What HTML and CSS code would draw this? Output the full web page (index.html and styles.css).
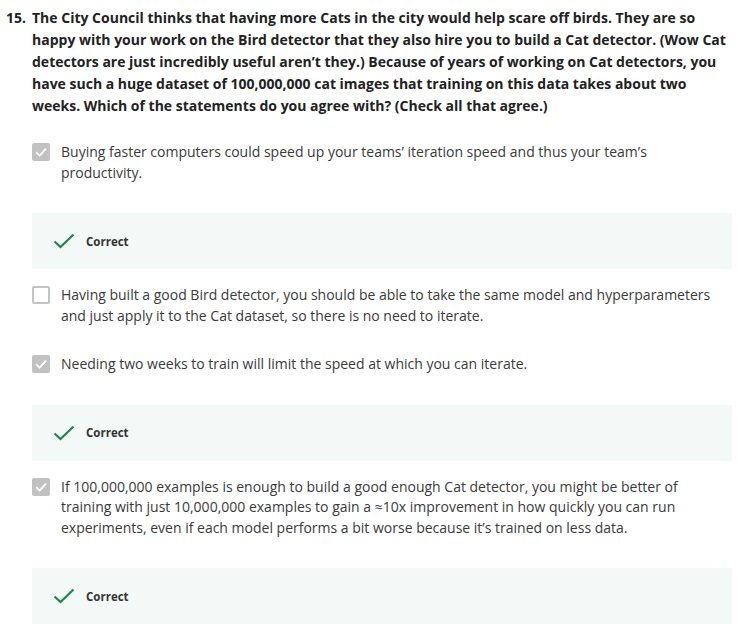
FILE: index.html
```html
<!DOCTYPE html>
<html>
<head>
<meta charset="utf-8">
<link rel="stylesheet" href="styles.css">
</head>
<body>
<div class="quiz">
  <div class="question">
    <div class="qnum">15.</div>
    <div class="qtext">The City Council thinks that having more Cats in the city would help scare off birds. They are so happy with your work on the Bird detector that they also hire you to build a Cat detector. (Wow Cat detectors are just incredibly useful aren’t they.) Because of years of working on Cat detectors, you have such a huge dataset of 100,000,000 cat images that training on this data takes about two weeks. Which of the statements do you agree with? (Check all that agree.)</div>
  </div>
  <div class="options">
    <div class="option">
      <div class="row">
        <span class="box checked"><svg viewBox="0 0 18 18" width="18" height="18"><path d="M4.2 9.3 L7.6 12.6 L14 5.6" fill="none" stroke="#fff" stroke-width="2"/></svg></span>
        <div class="otext">Buying faster computers could speed up your teams’ iteration speed and thus your team’s productivity.</div>
      </div>
      <div class="feedback"><svg class="tick" viewBox="0 0 22 16" width="22" height="16"><path d="M1.5 8.5 L7.5 14 L20.5 1.5" fill="none" stroke="#1f8354" stroke-width="2.2"/></svg><span>Correct</span></div>
    </div>
    <div class="option">
      <div class="row">
        <span class="box"></span>
        <div class="otext">Having built a good Bird detector, you should be able to take the same model and hyperparameters and just apply it to the Cat dataset, so there is no need to iterate.</div>
      </div>
    </div>
    <div class="option">
      <div class="row">
        <span class="box checked"><svg viewBox="0 0 18 18" width="18" height="18"><path d="M4.2 9.3 L7.6 12.6 L14 5.6" fill="none" stroke="#fff" stroke-width="2"/></svg></span>
        <div class="otext">Needing two weeks to train will limit the speed at which you can iterate.</div>
      </div>
      <div class="feedback"><svg class="tick" viewBox="0 0 22 16" width="22" height="16"><path d="M1.5 8.5 L7.5 14 L20.5 1.5" fill="none" stroke="#1f8354" stroke-width="2.2"/></svg><span>Correct</span></div>
    </div>
    <div class="option">
      <div class="row">
        <span class="box checked"><svg viewBox="0 0 18 18" width="18" height="18"><path d="M4.2 9.3 L7.6 12.6 L14 5.6" fill="none" stroke="#fff" stroke-width="2"/></svg></span>
        <div class="otext">If 100,000,000 examples is enough to build a good enough Cat detector, you might be better of training with just 10,000,000 examples to gain a ≈10x improvement in how quickly you can run experiments, even if each model performs a bit worse because it’s trained on less data.</div>
      </div>
      <div class="feedback"><svg class="tick" viewBox="0 0 22 16" width="22" height="16"><path d="M1.5 8.5 L7.5 14 L20.5 1.5" fill="none" stroke="#1f8354" stroke-width="2.2"/></svg><span>Correct</span></div>
    </div>
  </div>
</div>
</body>
</html>
```

FILE: styles.css
```css
html, body {
  margin: 0;
  padding: 0;
  background: #fff;
}
body {
  font-family: "Open Sans", "Liberation Sans", sans-serif;
  color: #333;
}
.quiz {
  width: 743px;
  padding: 7px 0 0 0;
  box-sizing: border-box;
}
.question {
  display: flex;
  font-size: 14px;
  font-weight: 700;
  line-height: 22px;
  color: #222;
  padding-right: 6px;
}
.qnum {
  width: 32px;
  padding-left: 6px;
  box-sizing: border-box;
  flex: none;
}
.qtext {
  flex: 1;
}
.options {
  margin: 25px 11px 0 32px;
}
.row {
  display: flex;
  align-items: flex-start;
  gap: 11px;
  margin-bottom: 30px;
  padding-right: 7px;
}
.row:last-child {
  margin-bottom: 28px;
}
.box {
  flex: none;
  width: 18px;
  height: 18px;
  margin-top: 1px;
  box-sizing: border-box;
  border: 2px solid #c4c4c4;
  border-radius: 2px;
  background: #fff;
  display: flex;
  align-items: center;
  justify-content: center;
}
.box.checked {
  border: none;
  background: #c1c1c1;
}
.box svg {
  display: block;
}
.otext {
  font-size: 14px;
  line-height: 20.5px;
  color: #3a3a3a;
}
.feedback {
  height: 56px;
  background: #f3f9f7;
  display: flex;
  align-items: center;
  padding-left: 21px;
  gap: 11px;
  margin-bottom: 16px;
  font-size: 11.5px;
  font-weight: 700;
  color: #333;
}
.tick {
  display: block;
}
```
